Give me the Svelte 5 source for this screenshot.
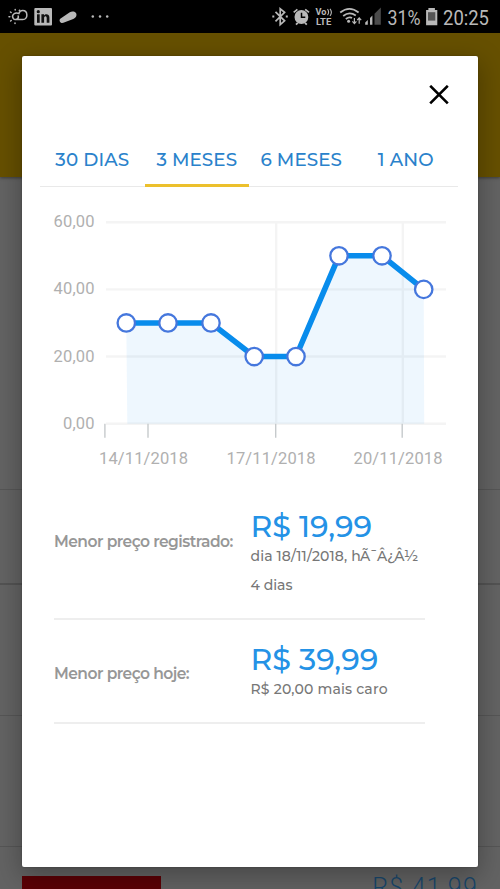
<script>
	const tabs = ["30 DIAS", "3 MESES", "6 MESES", "1 ANO"]
	let active = $state(1)
	let open = $state(true)

	const prices = [30, 30, 30, 20, 20, 50, 50, 40]
	const xs = [86.3, 128, 171, 214.2, 256, 299, 342, 383.7]
	const labels = [
		{ text: "60,00", value: 60 },
		{ text: "40,00", value: 40 },
		{ text: "20,00", value: 20 },
		{ text: "0,00", value: 0 }
	]
	const dates = [
		{ text: "14/11/2018", x: 59, tick: 108 },
		{ text: "17/11/2018", x: 186.5, tick: 235.7 },
		{ text: "20/11/2018", x: 313.5, tick: 362.2 }
	]

	const bottom = 236.7
	const toY = (value) => bottom - value * 3.358

	const line = prices.map((p, i) => `${xs[i]},${toY(p)}`).join(" ")
	const area = `${xs[0] + 1},${bottom} ${line} ${xs[7] + 0.5},${bottom}`
</script>

<div class="screen">
	<div class="status">
		<svg width="112" height="33" viewBox="0 0 112 33">
			<g fill="none" stroke="#b9b9b9" stroke-width="1.5" stroke-linecap="round">
				<path d="M16.5 19.6H22.8C28.5 19.4 28 10.5 22.6 10.6C20.8 10.6 19.5 11.8 18.9 13.5C15 11.8 11 15 13.2 18.3C15 21 19.2 18.8 18.2 16" />
				<path d="M9 16.8h.8M10.5 12l.6.5M15.2 9.4v.6M10.6 21l.6-.5M15 23.6v-.5M19.3 10.6l.3-.4" />
			</g>
			<rect x="34.3" y="8" width="17.7" height="17.6" rx="1" fill="#b9b9b9" />
			<g fill="#111">
				<rect x="37" y="14.3" width="2.7" height="8.5" />
				<circle cx="38.3" cy="11.7" r="1.6" />
				<path d="M41.4 14.3H44V15.5C45.4 13.4 49.4 13.7 49.4 17.6V22.8H46.7V18.3C46.7 15.5 44.1 15.8 44.1 18.2V22.8H41.4Z" />
			</g>
			<path d="M60.6 18.4L69.8 12.2C73.2 10.2 77.8 12.4 76.2 16.3C75.6 17.8 74.2 18.6 72.6 19.2L63.4 22.8C60 23.6 58.4 20 60.6 18.4Z" fill="#b9b9b9" />
			<g fill="#b9b9b9">
				<circle cx="92.8" cy="16.5" r="1.25" />
				<circle cx="100" cy="16.5" r="1.25" />
				<circle cx="107.2" cy="16.5" r="1.25" />
			</g>
		</svg>
		<svg width="230" height="33" viewBox="270 0 230 33">
			<g fill="none" stroke="#b9b9b9" stroke-width="1.7">
				<path d="M275.5 11.8L284.6 20.8L280.2 24.6V8.8L284.6 12.4L275.5 21.4" />
				<path d="M272.3 16.6h2M285.8 16.6h2" stroke-width="2" />
				<path d="M293.7 12.4L297.4 9.4M309 12.4L305.2 9.4M296 24.6l1.8-1.8M306.8 24.6l-1.8-1.8" stroke-width="1.8" />
			</g>
			<circle cx="301.4" cy="17" r="6.9" fill="#b9b9b9" />
			<path d="M301.5 12.8V17.2H305.3" fill="none" stroke="#000" stroke-width="1.5" />
			<g class="lte" fill="#b9b9b9">
				<text x="315.5" y="15.2" textLength="11" lengthAdjust="spacingAndGlyphs">Vo</text>
				<text x="316" y="24.9" textLength="15.3" lengthAdjust="spacingAndGlyphs">LTE</text>
			</g>
			<path d="M327.5 9.2q2.2 3 0 6M330 8.8q2.8 3.5 0 7" fill="none" stroke="#b9b9b9" stroke-width="1.1" />
			<g fill="none" stroke="#b9b9b9" stroke-width="1.8">
				<path d="M340.2 12.5Q349.5 5.2 358.6 12.5" />
				<path d="M343.2 16Q349.4 11 355.8 15.6" />
				<path d="M345.8 19Q349.4 16.4 352 18" />
			</g>
			<circle cx="348.6" cy="21.2" r="1.5" fill="#b9b9b9" />
			<path d="M354.4 18v5M352.4 21.4l2 2.2l2-2.2M359.2 23.8v-5M357.2 20.2l2-2.2l2 2.2" fill="none" stroke="#b9b9b9" stroke-width="1.2" />
			<path d="M365.2 24.8V22.4L367.8 20V24.8ZM370 24.8V18L372.4 15.6V24.8Z" fill="#b9b9b9" />
			<path d="M374.5 24.8V13.8L380.8 7.6V24.8Z" fill="#4b4b4b" />
			<g class="clock" fill="#b9b9b9">
				<text x="387.5" y="24.5" textLength="33" lengthAdjust="spacingAndGlyphs">31%</text>
				<text x="443" y="24.5" textLength="46" lengthAdjust="spacingAndGlyphs">20:25</text>
			</g>
			<path d="M428.4 8h6.5v2h2.4v15.2h-11.2V10h2.3Z" fill="#b9b9b9" />
			<rect x="428" y="12.2" width="7.3" height="8.4" fill="#555" />
		</svg>
	</div>

	<div class="page">
		<div class="top"></div>
		<div class="item first"></div>
		<div class="item second"></div>
		<div class="item third"></div>
		<div class="item fourth"></div>
		<div class="product">
			<div class="badge"></div>
			<div class="old-price">R$ 41,99</div>
		</div>
	</div>

	{#if open}
		<div class="modal">
			<div class="modal-header">
				<button class="close" aria-label="Fechar" onclick={() => (open = false)}>
					<svg width="20" height="20" viewBox="0 0 20 20">
						<path d="M1.2 0.8L18.8 18.4M18.8 0.8L1.2 18.4" stroke="#000" stroke-width="2.6" />
					</svg>
				</button>
			</div>

			<div class="tabs">
				{#each tabs as tab, i}
					<button class="tab" class:active={active === i} onclick={() => (active = i)}>{tab}</button>
				{/each}
			</div>

			<svg class="chart" width="418" height="290" viewBox="0 0 418 290">
				{#each labels as label}
					<text x="54.5" y={toY(label.value) + 5} text-anchor="end" textLength={label.value ? 41 : 31.5}>{label.text}</text>
					<line x1="66" x2="406" y1={toY(label.value)} y2={toY(label.value)} class="grid" />
				{/each}
				<line x1="236.2" x2="236.2" y1={toY(60)} y2={bottom} class="grid" />
				<line x1="362.8" x2="362.8" y1={toY(60)} y2={bottom} class="grid" />

				<polygon points={area} class="area" />
				<polyline points={line} class="line" />
				{#each prices as price, i}
					<circle cx={xs[i]} cy={toY(price)} r="8.7" class="point" />
				{/each}

				<line x1="64.9" x2="64.9" y1={bottom} y2={bottom + 14} class="tick" />
				{#each dates as date}
					<line x1={date.tick} x2={date.tick} y1={bottom} y2={bottom + 14} class="tick" />
					<text x={date.x} y="277" textLength="89">{date.text}</text>
				{/each}
			</svg>

			<div class="info">
				<div class="row lowest">
					<div class="label">Menor preço registrado:</div>
					<div class="value">
						<div class="price">R$ 19,99</div>
						<div class="detail when">dia 18/11/2018, <span>hÃ¯Â¿Â½</span></div>
						<div class="detail days">4 dias</div>
					</div>
				</div>
				<div class="row today">
					<div class="label hoje">Menor preço hoje:</div>
					<div class="value">
						<div class="price">R$ 39,99</div>
						<div class="detail more">R$ 20,00 mais caro</div>
					</div>
				</div>
			</div>
		</div>
	{/if}
</div>

<style>
	:global(body) {
		margin: 0;
		background: #000;
	}
	.screen {
		position: relative;
		width: 500px;
		height: 889px;
		overflow: hidden;
		font-family: Montserrat, Inter, "Liberation Sans", sans-serif;
	}
	.status {
		display: flex;
		justify-content: space-between;
		height: 33px;
		background: #000;
	}
	.status svg {
		display: block;
	}
	.lte {
		font: bold 8.2px Roboto, sans-serif;
	}
	.clock {
		font: 20.5px Roboto, sans-serif;
	}

	.page {
		display: flex;
		flex-direction: column;
		height: 856px;
		background: #636363;
	}
	.top {
		height: 144px;
		flex: none;
		background: #665000;
		box-shadow: 0 1px 3px rgba(0, 0, 0, 0.4);
	}
	.item {
		box-sizing: border-box;
		flex: none;
		border-bottom: 1px solid #565656;
	}
	.first {
		height: 313px;
	}
	.second {
		height: 95px;
		border-bottom: 2px solid #535353;
	}
	.third {
		height: 131px;
	}
	.fourth {
		height: 131px;
	}
	.product {
		display: flex;
		justify-content: space-between;
		padding: 29px 22px 0;
	}
	.badge {
		width: 139px;
		height: 20px;
		background: #5b0005;
	}
	.old-price {
		font-family: Roboto, sans-serif;
		font-weight: 300;
		font-size: 25px;
		line-height: 24px;
		letter-spacing: 1.2px;
		color: #19476c;
	}

	.modal {
		position: absolute;
		top: 55.5px;
		left: 22px;
		box-sizing: border-box;
		width: 456px;
		height: 811px;
		padding: 0 20px 0 18px;
		border-radius: 2px;
		background: #fff;
		box-shadow: 0 8px 26px 2px rgba(0, 0, 0, 0.28), 0 0 2px rgba(0, 0, 0, 0.3);
	}
	.modal-header {
		display: flex;
		justify-content: flex-end;
		height: 76px;
		padding: 29px 9px 0 0;
		box-sizing: border-box;
	}
	button {
		margin: 0;
		padding: 0;
		border: none;
		background: none;
		font-family: inherit;
	}
	.close {
		width: 20px;
		height: 20px;
	}
	.close svg {
		display: block;
	}
	.tabs {
		display: grid;
		grid-template-columns: repeat(4, 1fr);
		height: 55px;
		box-sizing: border-box;
		border-bottom: 1px solid #e9e9e9;
	}
	.tab {
		height: 55px;
		box-sizing: border-box;
		padding-top: 3px;
		border-bottom: 3px solid transparent;
		font-size: 18.3px;
		font-weight: 500;
		letter-spacing: 0.1px;
		white-space: nowrap;
		color: #2a82cb;
	}
	.tab.active {
		border-bottom-color: #ecc02c;
	}

	.chart {
		display: block;
		font: 16.5px Roboto, sans-serif;
		fill: #b0b0b0;
	}
	.grid {
		stroke: #f4f4f4;
		stroke-width: 2.4;
	}
	.tick {
		stroke: #c6cacc;
		stroke-width: 1.4;
	}
	.area {
		fill: #088cec;
		fill-opacity: 0.07;
	}
	.line {
		fill: none;
		stroke: #088cec;
		stroke-width: 5.6;
	}
	.point {
		fill: #fff;
		stroke: #4577dd;
		stroke-width: 2.3;
	}

	.info {
		padding: 0 33px 0 14px;
	}
	.row {
		display: flex;
		box-sizing: border-box;
		border-bottom: 2px solid #eee;
	}
	.lowest {
		height: 143px;
		padding-top: 33px;
	}
	.today {
		height: 104px;
		padding-top: 23px;
	}
	.label {
		flex: none;
		width: 196.5px;
		padding-top: 20px;
		font-size: 15.5px;
		font-weight: 600;
		line-height: 24px;
		letter-spacing: -0.54px;
		white-space: nowrap;
		color: #979797;
	}
	.hoje {
		padding-top: 19px;
	}
	.value {
		white-space: nowrap;
	}
	.price {
		height: 34px;
		font-size: 30px;
		font-weight: 500;
		line-height: 34px;
		color: #2492e6;
	}
	.detail {
		font-size: 14px;
		font-weight: 500;
		line-height: 29px;
		color: #777;
	}
	.when,
	.more {
		margin-top: -2px;
	}
	.when {
		letter-spacing: 0.1px;
	}
	.when span {
		letter-spacing: -0.75px;
	}
	.more {
		letter-spacing: 0.18px;
	}
</style>
